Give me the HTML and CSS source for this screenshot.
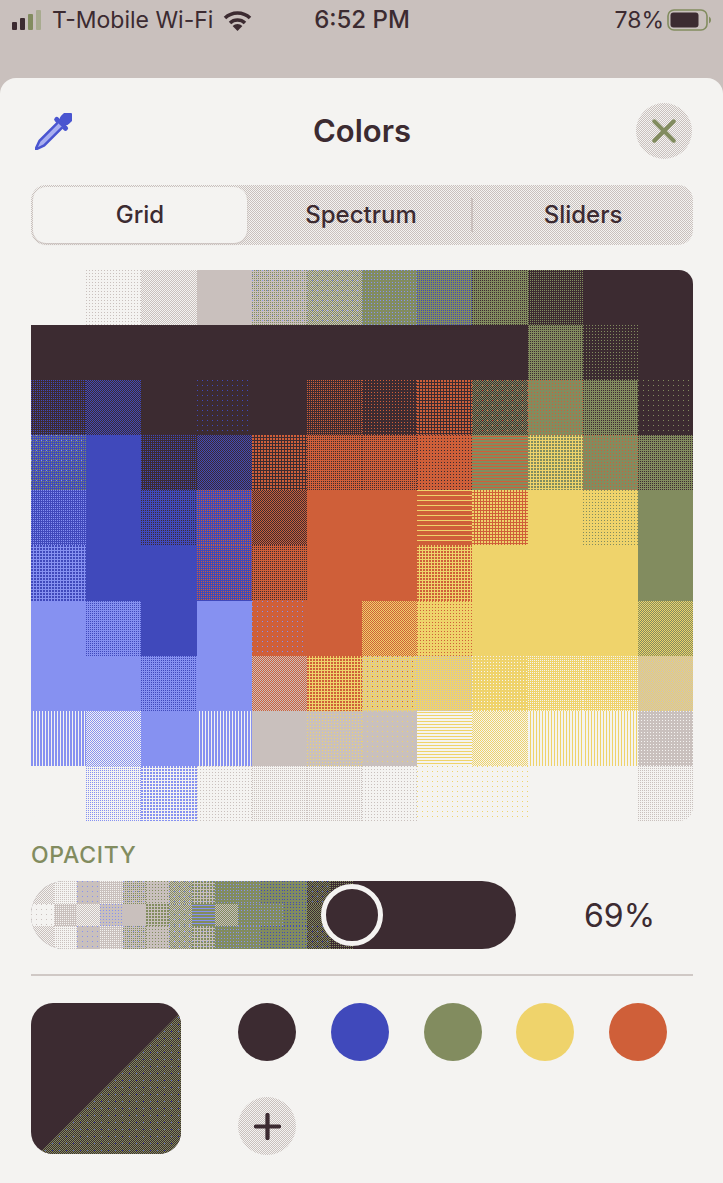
FILE: index.html
```html
<!DOCTYPE html>
<html lang="en">

<head>
	<meta charset="UTF-8">
	<title>Colors</title>
	<link rel="stylesheet" href="styles.css">
</head>

<body>
	<div class="status">
		<div class="status-left">
			<svg class="bars" width="32" height="20" viewBox="0 0 32 20">
				<rect x="0" y="12" width="5" height="8" rx="1" fill="#3c2b31" />
				<rect x="8" y="8" width="5" height="12" rx="1" fill="#3c2b31" />
				<rect x="16" y="4" width="5" height="16" rx="1" fill="#828c5f" />
				<rect x="24" y="0" width="5" height="20" rx="1" fill="#a8ab8f" />
			</svg>
			<span>T-Mobile Wi-Fi</span>
			<svg class="wifi" width="29" height="21" viewBox="0 0 29 21">
				<path d="M2 8 A18 18 0 0 1 27 8" fill="none" stroke="#3c2b31" stroke-width="3.6" />
				<path d="M7 13 A11 11 0 0 1 22 13" fill="none" stroke="#3c2b31" stroke-width="3.6" />
				<path d="M14.5 21 L9.6 16 A7 7 0 0 1 19.4 16 Z" fill="#3c2b31" />
			</svg>
		</div>
		<div class="status-time">6:52 PM</div>
		<div class="status-right">
			<span>78%</span>
			<svg width="45" height="24" viewBox="0 0 45 24">
				<rect x="1" y="2" width="39" height="20" rx="6" fill="none" stroke="#828c5f" stroke-width="1.6" />
				<rect x="3.5" y="4.500" width="28" height="15" rx="3" fill="#3c2b31" />
				<path d="M42 8.500 A4 4 0 0 1 42 15.500 Z" fill="#828c5f" />
			</svg>
		</div>
	</div>

	<div class="sheet">
		<div class="sheet-head">
			<svg class="dropper" width="37" height="37" viewBox="0 0 36 36">
				<g transform="rotate(45 18 18)" fill="#4a55d0">
					<rect x="12.500" y="-7" width="11" height="14" rx="5" />
					<rect x="9.500" y="5" width="17" height="5" rx="2.500" />
					<path d="M14.800 9 V34 L18 43 L21.200 34 V9" fill="#a9aff0" stroke="#4a55d0" stroke-width="2.400" />
				</g>
			</svg>
			<h1 class="title">Colors</h1>
			<button class="close a-bg b-grey p50">
				<svg width="24" height="24" viewBox="0 0 26 26">
					<path d="M2.500 2.500 L23.500 23.500 M23.500 2.500 L2.500 23.500" stroke="#828c5f" stroke-width="4.400" stroke-linecap="round" />
				</svg>
			</button>
		</div>

		<div class="segments a-bg b-grey p50">
			<div class="seg seg-on">Grid</div>
			<div class="seg">Spectrum</div>
			<div class="seg-line"></div>
			<div class="seg">Sliders</div>
		</div>

		<div class="grid">
			<!-- row 0 -->
			<div class="a-bg"></div>
			<div class="a-bg b-grey p11"></div>
			<div class="a-bg b-grey p50"></div>
			<div class="a-grey"></div>
			<div class="a-grey b-green p25 c-lb t3"></div>
			<div class="a-grey b-green p50 c-lb t3"></div>
			<div class="a-green b-lb p11"></div>
			<div class="a-green b-blue p25"></div>
			<div class="a-green b-dark p25"></div>
			<div class="a-dark b-green p25"></div>
			<div class="a-dark"></div>
			<div class="a-dark"></div>
			<!-- row 1 -->
			<div class="a-dark"></div>
			<div class="a-dark"></div>
			<div class="a-dark"></div>
			<div class="a-dark"></div>
			<div class="a-dark"></div>
			<div class="a-dark"></div>
			<div class="a-dark"></div>
			<div class="a-dark"></div>
			<div class="a-dark"></div>
			<div class="a-green b-dark p25"></div>
			<div class="a-dark b-green p11"></div>
			<div class="a-dark"></div>
			<!-- row 2 -->
			<div class="a-dark b-blue p25"></div>
			<div class="a-dark b-blue p50"></div>
			<div class="a-dark"></div>
			<div class="a-dark b-blue p06"></div>
			<div class="a-dark"></div>
			<div class="a-dark b-orange p25"></div>
			<div class="a-dark b-orange p11"></div>
			<div class="a-dark b-orange p44"></div>
			<div class="a-dark b-green p50 c-orange t3"></div>
			<div class="a-green b-orange p11"></div>
			<div class="a-green b-dark p25"></div>
			<div class="a-dark b-green p06"></div>
			<!-- row 3 -->
			<div class="a-blue b-green p25 c-lb t3"></div>
			<div class="a-blue"></div>
			<div class="a-dark b-blue p25"></div>
			<div class="a-blue b-dark p50"></div>
			<div class="a-dark b-orange p44"></div>
			<div class="a-orange b-dark p25"></div>
			<div class="a-orange b-dark p25"></div>
			<div class="a-orange b-dark p11"></div>
			<div class="a-green b-orange lines-h"></div>
			<div class="a-yellow b-green p44"></div>
			<div class="a-green b-orange p11"></div>
			<div class="a-green b-dark p25"></div>
			<!-- row 4 -->
			<div class="a-blue b-lb p25"></div>
			<div class="a-blue"></div>
			<div class="a-blue b-dark p25"></div>
			<div class="a-blue b-orange p25"></div>
			<div class="a-orange b-dark p50"></div>
			<div class="a-orange"></div>
			<div class="a-orange"></div>
			<div class="a-orange b-yellow lines-sparse"></div>
			<div class="a-orange b-yellow p44"></div>
			<div class="a-yellow"></div>
			<div class="a-yellow b-green p11"></div>
			<div class="a-green"></div>
			<!-- row 5 -->
			<div class="a-lb b-blue p44"></div>
			<div class="a-blue"></div>
			<div class="a-blue"></div>
			<div class="a-blue b-orange p25"></div>
			<div class="a-orange b-dark p25"></div>
			<div class="a-orange"></div>
			<div class="a-orange"></div>
			<div class="a-yellow b-orange p44"></div>
			<div class="a-yellow"></div>
			<div class="a-yellow"></div>
			<div class="a-yellow"></div>
			<div class="a-green"></div>
			<!-- row 6 -->
			<div class="a-lb"></div>
			<div class="a-lb b-blue p25"></div>
			<div class="a-blue"></div>
			<div class="a-lb"></div>
			<div class="a-orange b-lb p06"></div>
			<div class="a-orange"></div>
			<div class="a-orange b-yellow p50"></div>
			<div class="a-yellow b-orange p11"></div>
			<div class="a-yellow"></div>
			<div class="a-yellow"></div>
			<div class="a-yellow"></div>
			<div class="a-yellow b-green p50"></div>
			<!-- row 7 -->
			<div class="a-lb"></div>
			<div class="a-lb"></div>
			<div class="a-lb b-blue p25"></div>
			<div class="a-lb"></div>
			<div class="a-orange b-grey p50"></div>
			<div class="a-yellow b-orange p44"></div>
			<div class="a-yellow b-grey p25 c-orange t3"></div>
			<div class="a-yellow b-grey p25"></div>
			<div class="a-yellow b-bg p11"></div>
			<div class="a-yellow b-bg p25"></div>
			<div class="a-yellow b-bg p25"></div>
			<div class="a-grey b-yellow p50"></div>
			<!-- row 8 -->
			<div class="a-lb b-bg lines-v"></div>
			<div class="a-lb b-bg p50"></div>
			<div class="a-lb"></div>
			<div class="a-lb b-bg lines-v"></div>
			<div class="a-grey"></div>
			<div class="a-grey b-yellow p11"></div>
			<div class="a-grey b-yellow p06"></div>
			<div class="a-bg b-yellow lines-h"></div>
			<div class="a-yellow b-bg p50"></div>
			<div class="a-bg b-yellow lines-v"></div>
			<div class="a-bg b-yellow lines-v"></div>
			<div class="a-grey b-bg p11"></div>
			<!-- row 9 -->
			<div class="a-bg"></div>
			<div class="a-bg b-lb p25"></div>
			<div class="a-bg b-lb p44"></div>
			<div class="a-bg b-grey p11"></div>
			<div class="a-bg b-grey p25"></div>
			<div class="a-bg b-grey p25"></div>
			<div class="a-bg b-grey p11"></div>
			<div class="a-bg b-yellow p06"></div>
			<div class="a-bg b-yellow p06"></div>
			<div class="a-bg"></div>
			<div class="a-bg"></div>
			<div class="a-bg b-grey p25"></div>
		</div>

		<div class="label">OPACITY</div>
		<div class="opacity-row">
			<div class="slider">
				<div class="a-bg b-grey p50"></div>
				<div class="a-bg b-grey p25"></div>
				<div class="a-grey b-lb p06"></div>
				<div class="a-grey b-bg p25"></div>
				<div class="a-grey b-green p25 c-lb t3"></div>
				<div class="a-grey b-green p11"></div>
				<div class="a-grey b-green p50 c-lb t3"></div>
				<div class="a-grey b-green p44 c-lb t3"></div>
				<div class="a-green b-lb p11"></div>
				<div class="a-green b-lb p11"></div>
				<div class="a-green b-blue p11"></div>
				<div class="a-green b-blue p11"></div>
				<div class="a-dark b-green p50 c-blue t3"></div>
				<div class="a-dark b-green p25"></div>

				<div class="a-bg b-grey p06"></div>
				<div class="a-grey b-bg p25"></div>
				<div class="a-bg b-grey p50"></div>
				<div class="a-grey b-lb p11"></div>
				<div class="a-grey"></div>
				<div class="a-grey b-green p44"></div>
				<div class="a-grey b-green p50 c-lb t3"></div>
				<div class="a-green b-lb lines-h"></div>
				<div class="a-grey b-green p50"></div>
				<div class="a-green b-lb p11"></div>
				<div class="a-green b-lb p11"></div>
				<div class="a-green b-blue p11"></div>
				<div class="a-dark b-green p50"></div>
				<div class="a-dark b-green p25"></div>

				<div class="a-bg b-grey p50"></div>
				<div class="a-bg b-grey p25"></div>
				<div class="a-grey b-lb p06"></div>
				<div class="a-grey b-bg p25"></div>
				<div class="a-grey b-green p25 c-lb t3"></div>
				<div class="a-grey b-green p11"></div>
				<div class="a-grey b-green p50 c-lb t3"></div>
				<div class="a-grey b-green p44 c-lb t3"></div>
				<div class="a-green b-lb p11"></div>
				<div class="a-green b-lb p11"></div>
				<div class="a-green b-blue p11"></div>
				<div class="a-green b-blue p11"></div>
				<div class="a-dark b-green p50 c-blue t3"></div>
				<div class="a-dark b-green p25"></div>

				<div class="thumb"></div>
			</div>
			<div class="percent">69%</div>
		</div>

		<div class="rule"></div>

		<div class="picked">
			<div class="current"></div>
			<div class="swatches">
				<div class="dot a-dark"></div>
				<div class="dot a-blue"></div>
				<div class="dot a-green"></div>
				<div class="dot a-yellow"></div>
				<div class="dot a-orange"></div>
				<button class="add a-bg b-grey p50">
					<svg width="27" height="27" viewBox="0 0 28 28">
						<path d="M14 2 V26 M2 14 H26" stroke="#3c2b31" stroke-width="4.400" stroke-linecap="round" />
					</svg>
				</button>
			</div>
		</div>
	</div>
</body>

</html>
```
FILE: styles.css
```css
* {
	margin: 0;
	padding: 0;
	box-sizing: border-box;
}

body {
	width: 723px;
	height: 1183px;
	overflow: hidden;
	background: #c9c0bd;
	color: #3c2b31;
	font-family: Inter, "Liberation Sans", sans-serif;
	display: flex;
	flex-direction: column;
}

/* status bar */
.status {
	height: 78px;
	padding: 8px 11px 0 12px;
	display: grid;
	grid-template-columns: 1fr auto 1fr;
	align-items: start;
	font-size: 23px;
	line-height: 24px;
}

.status-left {
	display: flex;
	align-items: center;
	gap: 8px;
}

.wifi {
	margin-left: 2px;
}

.status-time {
	font-size: 24px;
	font-weight: 500;
}

.status-right {
	display: flex;
	justify-content: flex-end;
	align-items: center;
	gap: 3px;
}

/* sheet */
.sheet {
	flex: 1;
	background: #f4f3f1;
	border-radius: 16px 16px 0 0;
	padding: 25px 30px 0 31px;
}

.sheet-head {
	height: 56px;
	display: grid;
	grid-template-columns: 1fr auto 1fr;
	align-items: center;
}

.dropper {
	margin-left: 4px;
}

.title {
	font-size: 31px;
	font-weight: 600;
	line-height: 56px;
}

.close {
	justify-self: end;
	width: 56px;
	height: 56px;
	margin-right: 1px;
	border: 0;
	border-radius: 50%;
	display: flex;
	align-items: center;
	justify-content: center;
}

.segments {
	margin-top: 26px;
	height: 60px;
	padding: 2px 0 2px 2px;
	border-radius: 15px;
	display: flex;
	align-items: center;
	font-size: 24px;
	font-weight: 500;
}

.seg {
	flex: 1;
	text-align: center;
	line-height: 56px;
}

.seg-on {
	flex: none;
	width: 214px;
	height: 56px;
	margin-right: 4px;
	background: #f4f3f1;
	border-radius: 13px;
	box-shadow: 0 1px 2px #c9c0bd;
}

.seg-line {
	width: 2px;
	height: 34px;
	background: #c9c0bd;
}

/* colour grid */
.grid {
	margin-top: 25px;
	width: 662px;
	height: 551px;
	border-radius: 14px;
	overflow: hidden;
	display: grid;
	grid-template-columns: repeat(12, 1fr);
	grid-template-rows: repeat(10, 1fr);
}

.a-dark { --a: #3c2b31; background-color: #3c2b31; }
.a-blue { --a: #4049bb; background-color: #4049bb; }
.a-lb { --a: #8691f1; background-color: #8691f1; }
.a-orange { --a: #cf5f39; background-color: #cf5f39; }
.a-yellow { --a: #efd36b; background-color: #efd36b; }
.a-green { --a: #828c5f; background-color: #828c5f; }
.a-grey { --a: #c9c0bd; background-color: #c9c0bd; }
.a-bg { --a: #f4f3f1; background-color: #f4f3f1; }

.b-dark { --b: #3c2b31; }
.b-blue { --b: #4049bb; }
.b-lb { --b: #8691f1; }
.b-orange { --b: #cf5f39; }
.b-yellow { --b: #efd36b; }
.b-green { --b: #828c5f; }
.b-grey { --b: #c9c0bd; }
.b-bg { --b: #f4f3f1; }

.c-dark { --c: #3c2b31; }
.c-blue { --c: #4049bb; }
.c-lb { --c: #8691f1; }
.c-orange { --c: #cf5f39; }
.c-grey { --c: #c9c0bd; }

/* dither patterns, named by how much of b shows */
.p06 { background-image: conic-gradient(at 1px 1px, var(--a) 75%, var(--b) 0); background-size: 5px 5px; }
.p11 { background-image: conic-gradient(at 1px 1px, var(--a) 75%, var(--b) 0); background-size: 3px 3px; }
.p25 { background-image: conic-gradient(at 1px 1px, var(--a) 75%, var(--b) 0); background-size: 2px 2px; }
.p44 { background-image: conic-gradient(at 2px 2px, var(--a) 75%, var(--b) 0); background-size: 3px 3px; }
.p50 { background-image: conic-gradient(var(--a) 25%, var(--b) 0 50%, var(--a) 0 75%, var(--b) 0); background-size: 2px 2px; }
.lines-v { background-image: repeating-linear-gradient(90deg, var(--a) 0 2px, var(--b) 2px 3px); }
.lines-h { background-image: repeating-linear-gradient(0deg, var(--a) 0 2px, var(--b) 2px 3px); }
.lines-sparse { background-image: repeating-linear-gradient(0deg, var(--a) 0 4px, var(--b) 4px 5px); }

/* third colour sprinkled over a two colour dither */
.p25.t3 {
	background-image: conic-gradient(at 1px 1px, transparent 75%, var(--c) 0), conic-gradient(at 1px 1px, var(--a) 75%, var(--b) 0);
	background-size: 5px 5px, 2px 2px;
}

.p44.t3 {
	background-image: conic-gradient(at 1px 1px, transparent 75%, var(--c) 0), conic-gradient(at 2px 2px, var(--a) 75%, var(--b) 0);
	background-size: 5px 5px, 3px 3px;
}

.p50.t3 {
	background-image: conic-gradient(at 1px 1px, transparent 75%, var(--c) 0), conic-gradient(var(--a) 25%, var(--b) 0 50%, var(--a) 0 75%, var(--b) 0);
	background-size: 5px 5px, 2px 2px;
}

/* opacity */
.label {
	margin-top: 21px;
	font-size: 23px;
	font-weight: 500;
	letter-spacing: .7px;
	line-height: 26px;
	color: #828c5f;
}

.opacity-row {
	margin-top: 13px;
	display: flex;
	align-items: center;
}

.slider {
	position: relative;
	width: 485px;
	height: 68px;
	border-radius: 34px;
	overflow: hidden;
	background: #3c2b31;
	display: grid;
	grid-template-columns: repeat(14, 23px);
	grid-template-rows: repeat(3, 1fr);
}

.thumb {
	position: absolute;
	left: 290px;
	top: 3px;
	width: 62px;
	height: 62px;
	border: 5px solid #f4f3f1;
	border-radius: 50%;
	background: #3c2b31;
}

.percent {
	margin-left: 68px;
	font-size: 32px;
	font-weight: 400;
}

.rule {
	margin-top: 25px;
	width: 662px;
	height: 2px;
	background: #cfc8c5;
}

/* picked colours */
.picked {
	margin-top: 27px;
	display: flex;
}

.current {
	position: relative;
	width: 150px;
	height: 151px;
	border-radius: 22px;
	overflow: hidden;
	background: #3c2b31;
}

.current::after {
	content: "";
	position: absolute;
	inset: 0;
	clip-path: polygon(100% 6%, 100% 100%, 5% 100%);
	background-image:
		conic-gradient(at 1px 1px, transparent 75%, #4049bb 0),
		conic-gradient(#3c2b31 25%, #828c5f 0 50%, #3c2b31 0 75%, #828c5f 0);
	background-size: 7px 7px, 2px 2px;
}

.swatches {
	margin-left: 57px;
	display: grid;
	grid-template-columns: repeat(5, 58px);
	column-gap: 34.800px;
	row-gap: 36px;
}

.dot,
.add {
	width: 58px;
	height: 58px;
	border-radius: 50%;
}

.add {
	border: 0;
	display: flex;
	align-items: center;
	justify-content: center;
}
```
